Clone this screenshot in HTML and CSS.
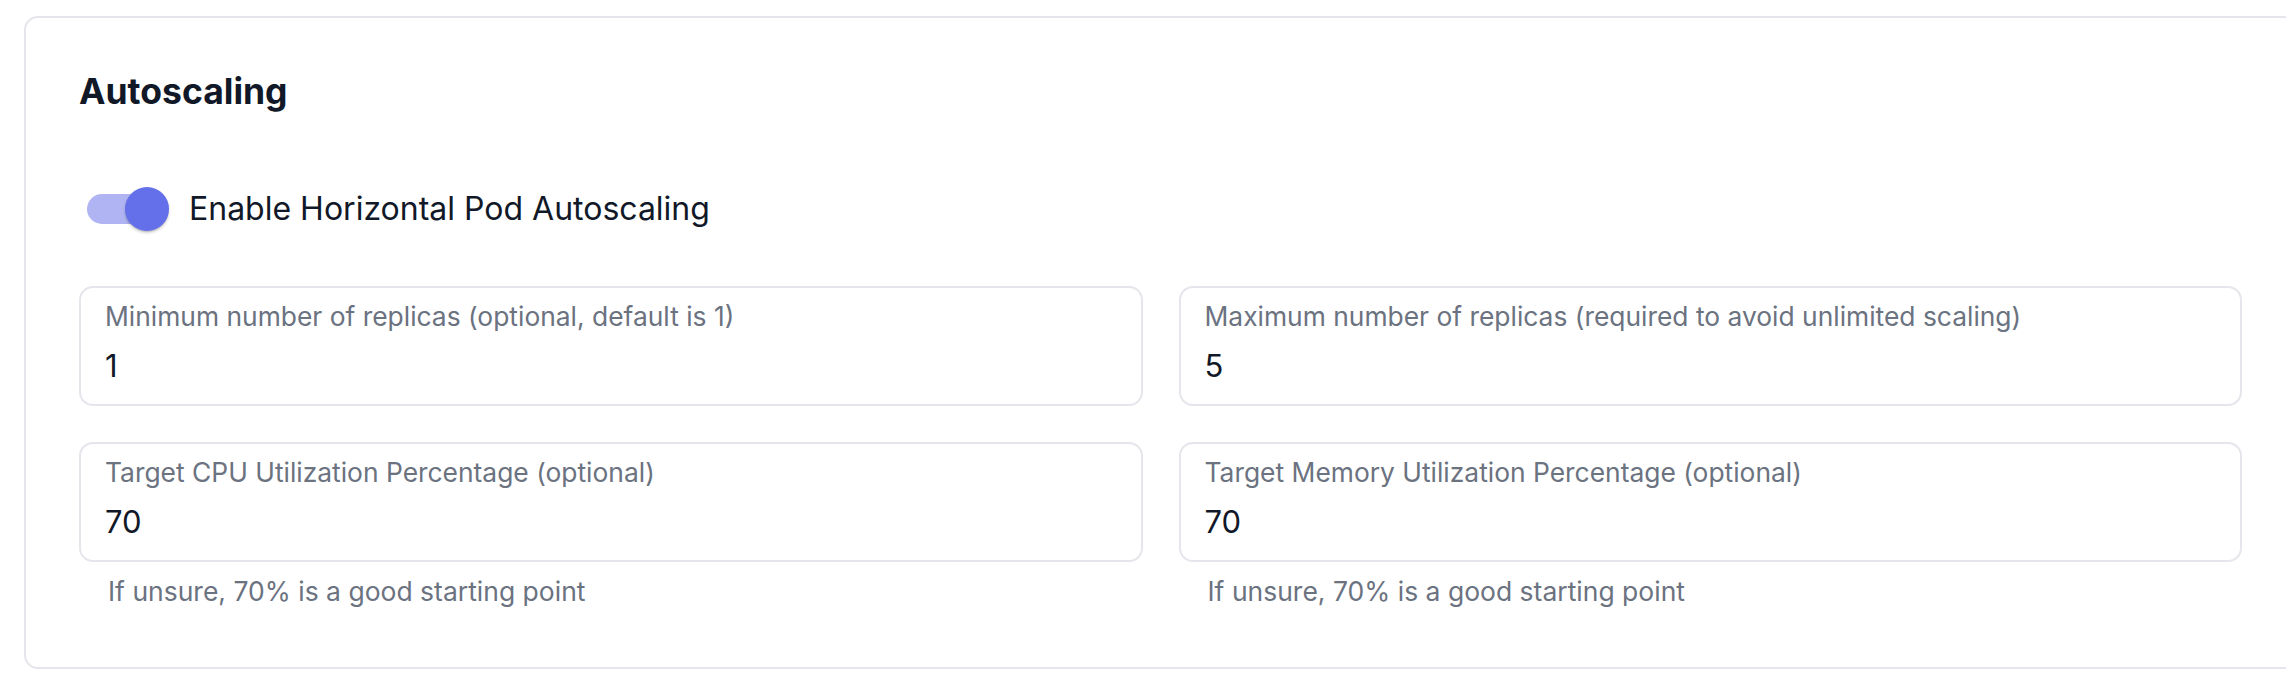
FILE: index.html
```html
<!DOCTYPE html>
<html lang="en">
<head>
<meta charset="utf-8">
<title>Autoscaling</title>
<link rel="stylesheet" href="styles.css">
</head>
<body>
<div class="page">
  <section class="card">
    <h2 class="title">Autoscaling</h2>
    <label class="switch-row">
      <span class="switch"><span class="track"></span><span class="thumb"></span></span>
      <span class="switch-label">Enable Horizontal Pod Autoscaling</span>
    </label>
    <div class="grid">
      <div class="cell">
        <div class="field">
          <div class="field-label">Minimum number of replicas (optional, default is 1)</div>
          <div class="field-value">1</div>
        </div>
      </div>
      <div class="cell">
        <div class="field">
          <div class="field-label">Maximum number of replicas (required to avoid unlimited scaling)</div>
          <div class="field-value">5</div>
        </div>
      </div>
      <div class="cell">
        <div class="field">
          <div class="field-label">Target CPU Utilization Percentage (optional)</div>
          <div class="field-value">70</div>
        </div>
        <div class="helper">If unsure, 70% is a good starting point</div>
      </div>
      <div class="cell">
        <div class="field">
          <div class="field-label">Target Memory Utilization Percentage (optional)</div>
          <div class="field-value">70</div>
        </div>
        <div class="helper">If unsure, 70% is a good starting point</div>
      </div>
    </div>
  </section>
</div>
</body>
</html>
```
FILE: styles.css
```css
* { box-sizing: border-box; }
html, body { margin: 0; padding: 0; background: #ffffff; }
body { font-family: Inter, "Noto Sans", sans-serif; color: #111827; }
.page {
  width: 100vw;
  height: 100vh;
  overflow: hidden;
  padding: 16px 0 0 24px;
}
.card {
  width: 2273px;
  border: 2px solid #e5e6eb;
  border-radius: 14px;
  padding: 52px 53px 60px 53px;
}
.title {
  margin: 0;
  font-size: 35.5px;
  font-weight: 700;
  line-height: 44px;
  color: #111827;
}
.switch-row {
  display: flex;
  align-items: center;
  margin-top: 73px;
  height: 44px;
}
.switch {
  position: relative;
  width: 110px;
  height: 44px;
  flex: none;
}
.track {
  position: absolute;
  left: 8px;
  top: 7px;
  width: 75px;
  height: 30px;
  border-radius: 15px;
  background: #b0b4f3;
}
.thumb {
  position: absolute;
  left: 46px;
  top: 0;
  width: 44px;
  height: 44px;
  border-radius: 50%;
  background: #6470e9;
  box-shadow: 0 2px 3px rgba(0,0,0,0.18), 0 1px 1px rgba(0,0,0,0.1);
}
.switch-label {
  font-size: 32px;
  line-height: 40px;
  color: #111827;
}
.grid {
  margin-top: 55px;
  display: grid;
  grid-template-columns: 1fr 1fr;
  column-gap: 36px;
  row-gap: 36px;
}
.field {
  height: 120px;
  border: 2px solid #e5e6eb;
  border-radius: 14px;
  padding: 12px 24px 0 24px;
}
.field-label {
  font-size: 26.4px;
  line-height: 32px;
  color: #6b7280;
}
.field-value {
  margin-top: 15px;
  font-size: 31px;
  line-height: 38px;
  color: #111827;
}
.helper {
  margin-top: 13px;
  padding-left: 29px;
  font-size: 26.5px;
  line-height: 32px;
  color: #6b7280;
}
```
